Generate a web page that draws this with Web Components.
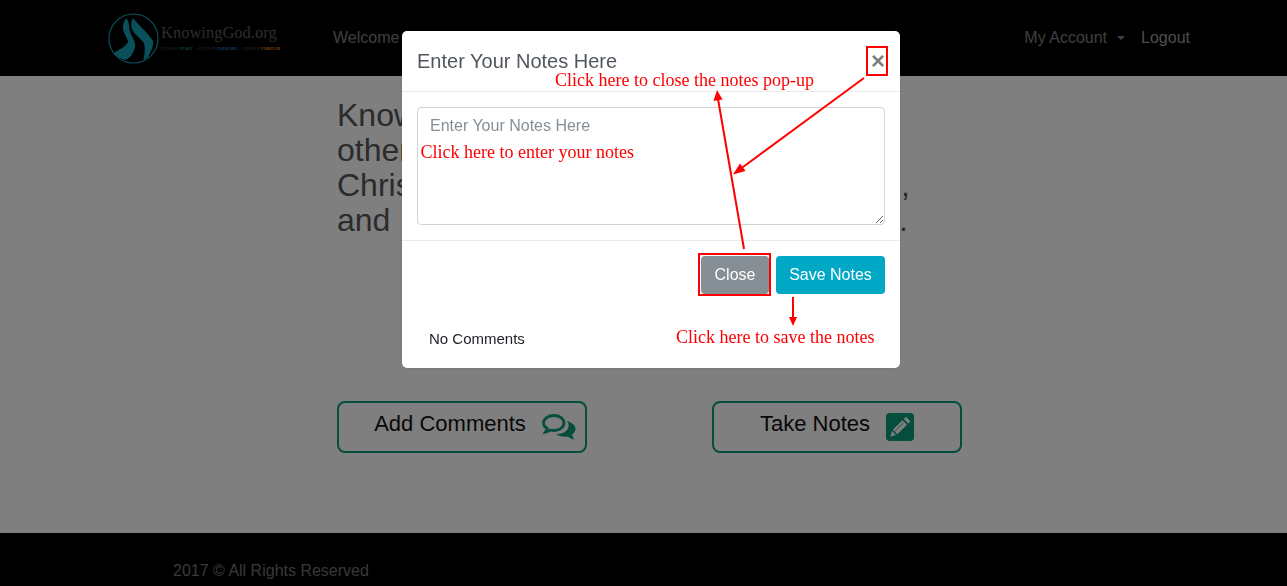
<!DOCTYPE html>
<html lang="en">
<head>
<meta charset="utf-8">
<title>Notes</title>
<style>
  html, body { margin: 0; height: 586px; overflow: hidden; }
  body { font-family: "Liberation Sans", Arial, sans-serif; background: #fff; display: flex; flex-direction: column; }
</style>
</head>
<body>
<app-header></app-header>
<lesson-page>
  <action-button label="Add Comments" icon="comments"></action-button>
  <action-button label="Take Notes" icon="pencil"></action-button>
</lesson-page>
<app-footer></app-footer>
<notes-modal></notes-modal>

<script>
class AppHeader extends HTMLElement {
  constructor() {
    super();
    this.attachShadow({ mode: 'open' });
  }

  connectedCallback() {
    this.shadowRoot.innerHTML = `
      <style>
        :host {
          display: flex;
          flex: none;
          align-items: center;
          height: 76px;
          background: #000;
          padding: 0 97px 0 108px;
          box-sizing: border-box;
          font-size: 16px;
        }
        .logo { display: flex; align-items: center; width: 225px; }
        .brand { margin-left: 2px; margin-top: -1px; }
        .name {
          font: 16.5px/22px "Liberation Serif", serif;
          color: #5a5a5a;
          margin-top: -1px;
        }
        .tag {
          font: 3.9px/5px "Liberation Serif", serif;
          color: #555;
          white-space: nowrap;
          margin-top: 3px;
        }
        .tag b { font-weight: 700; }
        nav { flex: 1; display: flex; align-items: center; }
        a { color: rgba(255,255,255,.5); text-decoration: none; }
        .right { margin-left: auto; display: flex; gap: 16px; align-items: center; }
        .caret {
          display: inline-block;
          margin-left: 10px;
          vertical-align: 3px;
          border-top: 4.8px solid;
          border-left: 4.8px solid transparent;
          border-right: 4.8px solid transparent;
        }
        .on { color: rgba(255,255,255,.62); }
      </style>
      <div class="logo">
        <svg width="51" height="51" viewBox="0 0 51 51">
          <circle cx="25.5" cy="25.5" r="24.5" fill="none" stroke="#12a0b4" stroke-width="1.2"/>
          <path d="M18.700 5.300C15 9 14.500 13 15.300 17c.8 4 3.500 7.500 5 11.700C18 33 11 37 5.300 40.300 8 43.500 12 45.800 17 47c3-1.500 5.700-2.800 6.700-5 2.300-4 4-7.500 3.300-11.700-.7-4-3.800-7.500-5-11.600-.8-4-.6-9-3.300-13.400z" fill="#12a0b4"/>
          <path d="M24.700 5.300C23.300 8 23 12 23.700 15.300c2 5.500 8 9.700 11.800 14 2 4 1.500 11.700-.2 17.700 2-.8 3.800-2 5-3.300 2.500-5 5-10 5-15-3.800-7-9-11-13-15.500-2.800-3-5.500-6-7.600-7.900z" fill="#12a0b4"/>
        </svg>
        <div class="brand">
          <div class="name">KnowingGod.org</div>
          <div class="tag">PATHWAY <b style="color:#1f9d63">START</b> &mdash; PATHWAY <b style="color:#2a78c4">FORWARD</b> &mdash; PATHWAY <b style="color:#e58a1f">FOREVER</b></div>
        </div>
      </div>
      <nav>
        <a href="#">Welcome</a>
        <div class="right">
          <a href="#">My Account<span class="caret"></span></a>
          <a href="#" class="on">Logout</a>
        </div>
      </nav>
    `;
  }
}

class LessonPage extends HTMLElement {
  constructor() {
    super();
    this.attachShadow({ mode: 'open' });
  }

  connectedCallback() {
    this.shadowRoot.innerHTML = `
      <style>
        :host {
          display: block;
          flex: none;
          height: 457px;
          box-sizing: border-box;
          padding: 21.6px 0 0 337px;
        }
        .lead {
          font-size: 32px;
          line-height: 35.2px;
          color: #565656;
          width: 573px;
        }
        .lead div { white-space: nowrap; }
        .lead .fit { white-space: normal; text-align-last: justify; }
        .actions {
          display: flex;
          gap: 125px;
          margin-top: 162.400px;
        }
      </style>
      <div class="lead">
        <div>Knowing God is shared with</div>
        <div>other believers who grow in</div>
        <div class="fit">Christ, learning to love and forgive,</div>
        <div class="fit" style="width:571px">and bringing glory to His name.</div>
      </div>
      <div class="actions"><slot></slot></div>
    `;
  }
}

class ActionButton extends HTMLElement {
  constructor() {
    super();
    this.attachShadow({ mode: 'open' });
  }

  connectedCallback() {
    const label = this.getAttribute('label') || '';
    const kind = this.getAttribute('icon');
    this.shadowRoot.innerHTML = `
      <style>
        :host {
          display: flex;
          align-items: center;
          justify-content: center;
          width: 250px;
          height: 52px;
          box-sizing: border-box;
          border: 2px solid #0a9a78;
          border-radius: 8px;
          font-size: 22px;
          color: #111;
          gap: 16px;
        }
        span { margin-top: -5px; }
        svg { display: block; }
      </style>
      <span>${label}</span>
      ${kind === 'comments' ? this.commentsIcon() : this.pencilIcon()}
    `;
  }

  commentsIcon() {
    // the reference centres the label alone, so the icon does not count for the width
    return `<svg width="34" height="28" viewBox="0 0 34 28" style="margin:1px -26px 0 0">
      <path d="M12 2.500c5.500 0 10 3.400 10 7.500s-4.500 7.500-10 7.500c-1.300 0-2.600-.2-3.700-.5-1.300 1-2.800 1.700-4.800 2 .9-1.200 1.500-2.500 1.600-3.800C2.800 14.200 1.500 12.200 1.500 10c0-4.100 4.700-7.500 10.500-7.500z" fill="none" stroke="#0a9a78" stroke-width="2.800"/>
      <path d="M25 8c4.500 1.500 8.500 4 8.500 8 0 2.300-1.200 4-3.300 5.500.2 1.800.9 3.300 2.300 5-2.800-.5-5-1.700-6.600-3.100-1 .2-2 .3-3 .3-3.500 0-6.500-1-8.400-2.700 6 .2 13-3 12-10-.2-1-.8-2-1.500-3z" fill="#0a9a78"/>
    </svg>`;
  }

  pencilIcon() {
    return `<svg width="28" height="28" viewBox="0 0 28 28" style="margin-top:1px">
      <rect width="28" height="28" rx="4" fill="#0a9a78"/>
      <path d="M6.800 16.800 16.500 7.200 21 11.700 11.300 21.300z" fill="#fff"/>
      <path d="M8.500 18.700 17.500 9.800" stroke="#0a9a78" stroke-width=".8" fill="none"/>
      <path d="M17.800 5.900 19 4.700c.6-.6 1.400-.6 2 0l2.500 2.500c.6.600.6 1.400 0 2L22.300 10.400z" fill="#fff"/>
      <path d="M6 18 10 22 4.300 23.800z" fill="#fff"/>
    </svg>`;
  }
}

class AppFooter extends HTMLElement {
  constructor() {
    super();
    this.attachShadow({ mode: 'open' });
  }

  connectedCallback() {
    this.shadowRoot.innerHTML = `
      <style>
        :host {
          display: block;
          flex: 1;
          background: #000;
          color: rgba(255,255,255,.45);
          font-size: 16px;
          line-height: 24px;
          padding: 26px 0 0 173px;
        }
      </style>
      2017 &copy; All Rights Reserved
    `;
  }
}

class NotesModal extends HTMLElement {
  constructor() {
    super();
    this.attachShadow({ mode: 'open' });
  }

  connectedCallback() {
    this.shadowRoot.innerHTML = `
      <style>
        :host {
          position: fixed;
          inset: 0;
          display: flex;
          justify-content: center;
          align-items: flex-start;
          padding: 31px 0 0 15px;
          background: rgba(0,0,0,.5);
          color: #212529;
        }
        .dialog {
          position: relative;
          width: 498px;
          height: 337px;
          box-sizing: border-box;
          background: #fff;
          border-radius: 5px;
          box-shadow: 0 0 1px rgba(0,0,0,.4);
        }
        header {
          display: flex;
          justify-content: space-between;
          padding: 15px;
          height: 61px;
          box-sizing: border-box;
          border-bottom: 1px solid #e9ecef;
        }
        h5 {
          margin: 0;
          font-size: 20px;
          font-weight: 400;
          line-height: 30px;
          color: #50565e;
        }
        .x {
          font-size: 24px;
          font-weight: 700;
          line-height: 30px;
          color: #7f7f7f;
        }
        .body { padding: 15px; height: 149px; box-sizing: border-box; border-bottom: 1px solid #e9ecef; }
        textarea {
          display: block;
          width: 100%;
          height: 118px;
          box-sizing: border-box;
          border: 1px solid #ced4da;
          border-radius: 4px;
          padding: 6px 12px;
          font: 16px/24px "Liberation Sans", Arial, sans-serif;
          outline: none;
        }
        textarea::placeholder { color: #868e96; opacity: 1; }
        footer {
          display: flex;
          justify-content: flex-end;
          gap: 7px;
          padding: 15px;
        }
        button {
          height: 38px;
          border: 0;
          border-radius: 4px;
          font: 16px "Liberation Sans", Arial, sans-serif;
          color: #fff;
        }
        .grey { background: #868e96; width: 68px; padding: 0; }
        .teal { background: #00a8c6; width: 109px; padding: 0; }
        .note {
          padding: 18px 27px;
          font-size: 15px;
          line-height: 23px;
          color: #212529;
        }
        /* red instructions drawn on top of the dialog */
        .ann {
          position: absolute;
          color: #f00;
          font: 18px/22px "Liberation Serif", serif;
          white-space: nowrap;
        }
        svg.marks { position: absolute; left: 0; top: 0; pointer-events: none; }
      </style>
      <div class="dialog">
        <header>
          <h5>Enter Your Notes Here</h5>
          <span class="x">&times;</span>
        </header>
        <div class="body">
          <textarea placeholder="Enter Your Notes Here"></textarea>
        </div>
        <footer>
          <button class="grey">Close</button>
          <button class="teal">Save Notes</button>
        </footer>
        <div class="note">No Comments</div>

        <div class="ann" style="left:153px;top:38px">Click here to close the notes pop-up</div>
        <div class="ann" style="left:18.5px;top:110px">Click here to enter your notes</div>
        <div class="ann" style="left:274px;top:295px">Click here to save the notes</div>
        <svg class="marks" width="498" height="337" viewBox="0 0 498 337">
          <g fill="none" stroke="#f00" stroke-width="2">
            <rect x="465" y="16" width="20" height="28"/>
            <rect x="297" y="223" width="71" height="41"/>
            <path d="M462 47 337 139"/>
            <path d="M342 218 316 68"/>
            <path d="M391 266V288"/>
          </g>
          <g fill="#f00">
            <path d="M331 143.500 338 132.500 343.500 140z"/>
            <path d="M315 59 311.500 70 320.500 68.500z"/>
            <path d="M391 295 387 286H395z"/>
          </g>
        </svg>
      </div>
    `;
  }
}

customElements.define('app-header', AppHeader);
customElements.define('lesson-page', LessonPage);
customElements.define('action-button', ActionButton);
customElements.define('app-footer', AppFooter);
customElements.define('notes-modal', NotesModal);
</script>
</body>
</html>
